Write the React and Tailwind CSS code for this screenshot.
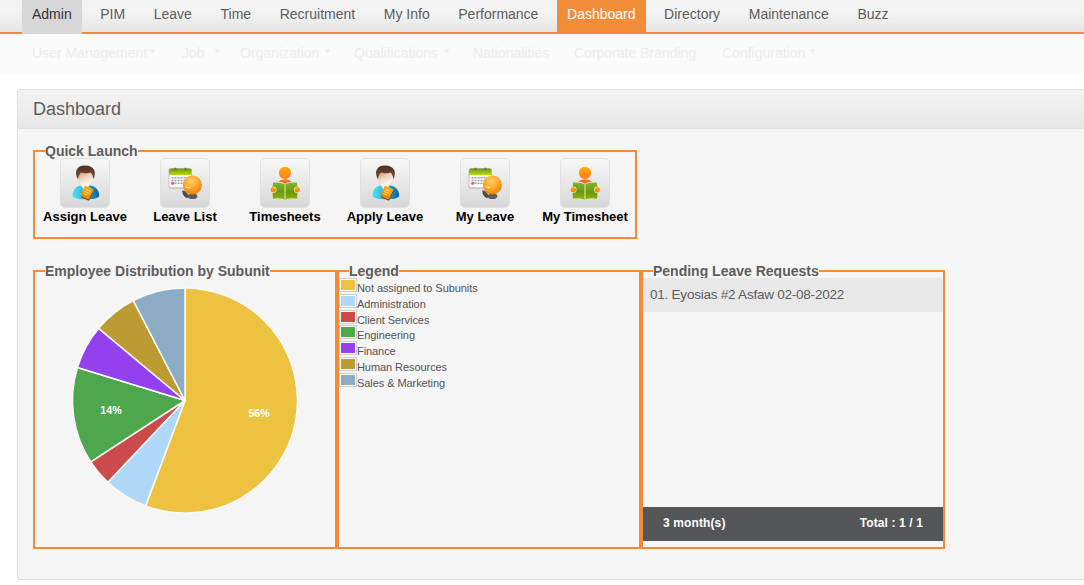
import React from "react";

const mainTabs = ["Admin", "PIM", "Leave", "Time", "Recruitment", "My Info", "Performance", "Dashboard", "Directory", "Maintenance", "Buzz"];

const subTabs = [
  { label: "User Management", arrow: true, width: "w-[150px]", gap: "ml-[2px]" },
  { label: "Job", arrow: true, width: "w-[58px]", gap: "ml-[9px]" },
  { label: "Organization", arrow: true, width: "w-[114px]", gap: "ml-[5px]" },
  { label: "Qualifications", arrow: true, width: "w-[119px]", gap: "ml-[5px]" },
  { label: "Nationalities", arrow: false, width: "w-[101px]", gap: "" },
  { label: "Corporate Branding", arrow: false, width: "w-[148px]", gap: "" },
  { label: "Configuration", arrow: true, width: "w-[110px]", gap: "ml-[4px]" },
];

const units = [
  { name: "Not assigned to Subunits", count: 44, color: "#edc240", label: "56%" },
  { name: "Administration", count: 5, color: "#afd8f8" },
  { name: "Client Services", count: 3, color: "#cb4b4b" },
  { name: "Engineering", count: 11, color: "#4da74d", label: "14%" },
  { name: "Finance", count: 5, color: "#9440ed" },
  { name: "Human Resources", count: 5, color: "#bd9b33" },
  { name: "Sales & Marketing", count: 6, color: "#8cacc6" },
];

function PersonIcon() {
  return (
    <svg viewBox="0 0 50 50" className="-m-px size-[50px]">
      <defs>
        <linearGradient id="body" x1="0" x2="1">
          <stop offset="0" stopColor="#52e0f0" />
          <stop offset=".45" stopColor="#27b8dc" />
          <stop offset="1" stopColor="#0a63a0" />
        </linearGradient>
        <linearGradient id="face" x1="0" x2=".4" y1="0" y2="1">
          <stop offset="0" stopColor="#b98058" />
          <stop offset=".55" stopColor="#ecd0ba" />
          <stop offset="1" stopColor="#fff5ec" />
        </linearGradient>
        <linearGradient id="hair" y1="0" y2="1" x2="0">
          <stop offset="0" stopColor="#4e2f20" />
          <stop offset="1" stopColor="#7c5037" />
        </linearGradient>
        <linearGradient id="card" x1="0" y1="0" x2="0" y2="1">
          <stop offset="0" stopColor="#ffae13" />
          <stop offset="1" stopColor="#f38200" />
        </linearGradient>
      </defs>
      <path d="M12.500 38.500c0-7.500 4-10.500 9-11.200h8c5 .7 10 4 9.700 11-3 3-8 3-13.500 3s-10-.3-13.200-2.800z" fill="url(#body)" />
      <path d="M20.500 26.500l4.500 8 5-8z" fill="#f4f7f8" />
      <ellipse cx="25.200" cy="19.500" rx="7.400" ry="8.300" fill="url(#face)" />
      <path d="M18 21.500C13.800 14 16.500 7.600 25 7.600c9.200 0 12.200 6.500 8.200 13.900-.2-3-.8-5.300-2.700-6.900-3 1.300-7.500.4-9.700-.2-1.600 2-2.500 4-2.800 7.100z" fill="url(#hair)" />
      <g transform="rotate(25 27 35)">
        <rect x="22.800" y="30.400" width="9.300" height="11" rx="1.400" fill="#76401a" />
        <rect x="22" y="29" width="9.500" height="11.300" rx="1.200" fill="url(#card)" />
        <path d="M24 32.200h5.500M24 34.500h5.500M24 36.800h4" stroke="#ffdc6c" strokeWidth="1" />
      </g>
    </svg>
  );
}

function CalendarIcon() {
  return (
    <svg viewBox="0 0 50 50" className="-m-px size-[50px]">
      <defs>
        <radialGradient id="ball" cx=".45" cy=".3" r=".75">
          <stop offset="0" stopColor="#ffcf63" />
          <stop offset=".5" stopColor="#ffa72b" />
          <stop offset="1" stopColor="#ee7b09" />
        </radialGradient>
        <linearGradient id="calHead" x1="0" y1="0" x2="0" y2="1">
          <stop offset="0" stopColor="#6f9408" />
          <stop offset="1" stopColor="#b4e013" />
        </linearGradient>
      </defs>
      <rect x="8.700" y="10.500" width="23.300" height="20" rx="2" fill="#a9aaa9" />
      <rect x="9.300" y="11" width="22" height="18.500" rx="1.500" fill="#fafafa" />
      <path d="M9 17v-4.500q0-2 2-2h18.500q2 0 2 2V17z" fill="url(#calHead)" />
      <path d="M15.500 9.800v2.500M25.500 9.800v2.500" stroke="#666" strokeWidth="1.600" />
      <path d="M11.500 19.800h18M11.500 22.500h18M11.500 25.200h14" stroke="#9da0a1" strokeWidth="1.500" strokeDasharray="2 1" />
      <rect x="11.500" y="24" width="2.600" height="2.700" fill="#d66552" />
      <path d="M22.300 32.500q3-.5 5 2.700 2 3-.2 5-5-2-4.800-7.700z" fill="#4c4c4c" />
      <ellipse cx="32.500" cy="38.300" rx="4.800" ry="2.800" fill="#5b5b5b" />
      <circle cx="32.400" cy="27" r="9.600" fill="url(#ball)" />
      <path d="M24.600 27.600c1.600 1.800 3.700 1.700 6 .9-.8 2.600-4.800 2.400-6-.9z" fill="#fff2ca" />
    </svg>
  );
}

function ReaderIcon() {
  return (
    <svg viewBox="0 0 50 50" className="-m-px size-[50px]">
      <defs>
        <linearGradient id="skin" x1="0" y1="0" x2="0" y2="1">
          <stop offset="0" stopColor="#ffae08" />
          <stop offset="1" stopColor="#ff7c12" />
        </linearGradient>
        <linearGradient id="book" x1="0" y1="0" x2="0" y2="1">
          <stop offset="0" stopColor="#79ba29" />
          <stop offset=".55" stopColor="#6e9610" />
          <stop offset="1" stopColor="#87b607" />
        </linearGradient>
      </defs>
      <circle cx="25" cy="14.900" r="6.100" fill="url(#skin)" />
      <path d="M18 24q2.500-2.700 7-2.700t7 2.700l-4 .2-3 1.500-3-1.500z" fill="#f26b29" />
      <path d="M13 24.600q6-.7 12 1.500 6-2.200 12-1.500v3l1 1-1 12.200q-6-1.200-12 .7-6-1.900-12-.7L12 28.600l1-1z" fill="url(#book)" />
      <path d="M25 26v15" stroke="#dff0b5" strokeWidth="1" />
      <circle cx="13.300" cy="31.700" r="3.200" fill="#edf4e1" />
      <circle cx="37.300" cy="31.700" r="3.200" fill="#edf4e1" />
      <circle cx="13.300" cy="31.700" r="2.700" fill="url(#skin)" />
      <circle cx="37.300" cy="31.700" r="2.700" fill="url(#skin)" />
    </svg>
  );
}

const shortcuts = [
  { label: "Assign Leave", Icon: PersonIcon },
  { label: "Leave List", Icon: CalendarIcon },
  { label: "Timesheets", Icon: ReaderIcon },
  { label: "Apply Leave", Icon: PersonIcon },
  { label: "My Leave", Icon: CalendarIcon },
  { label: "My Timesheet", Icon: ReaderIcon },
];

function Group({ title, className, children }) {
  return (
    <fieldset className={`border-2 border-[#f28c38] ${className}`}>
      <legend className="ml-[10px] h-[14px] whitespace-nowrap text-[14px] font-bold leading-[14px] text-[#5d5d5d]">{title}</legend>
      {children}
    </fieldset>
  );
}

function Pie() {
  const total = units.reduce((sum, u) => sum + u.count, 0);
  const point = (turn, r) => [
    150 + r * Math.sin(turn * 2 * Math.PI),
    122.500 - r * Math.cos(turn * 2 * Math.PI),
  ];
  let start = 0;
  const slices = units.map((u) => {
    const end = start + u.count / total;
    const [x1, y1] = point(start, 112.5);
    const [x2, y2] = point(end, 112.5);
    const [lx, ly] = point((start + end) / 2, 75);
    const d = `M150 122.500L${x1} ${y1}A112.500 112.500 0 ${end - start > 0.5 ? 1 : 0} 1 ${x2} ${y2}Z`;
    start = end;
    return { ...u, d, lx, ly };
  });
  return (
    <svg width="300" height="260" viewBox="0 0 300 260" className="block">
      {slices.map((s) => (
        <path key={s.name} d={s.d} fill={s.color} stroke="#fafafa" strokeWidth="1.500" strokeLinejoin="round" />
      ))}
      {slices.filter((s) => s.label).map((s) => (
        <text key={s.name} x={s.lx + 0.3} y={s.ly + 3.2} textAnchor="middle" className="fill-white text-[10.7px] font-bold">{s.label}</text>
      ))}
    </svg>
  );
}

export default function App() {
  return (
    <div className="h-[585px] w-full overflow-hidden bg-white font-['Liberation_Sans',Arial,sans-serif] text-[#5d5d5d]">
      <nav className="flex h-[34px] gap-[8.6px] border-b-2 border-[#f28c38] bg-linear-to-b from-[#f3f3f3] from-40% to-[#e5e5e5] pl-[22px] text-[14px] leading-[28px]">
        {mainTabs.map((tab) => (
          <a
            key={tab}
            className={
              "h-[34px] shrink-0 whitespace-nowrap px-[10px] " +
              (tab === "Admin" ? "bg-[#d7d7d7] text-[#333]" : tab === "Dashboard" ? "bg-[#f28c38] text-white" : "")
            }
          >
            {tab}
          </a>
        ))}
      </nav>
      <nav className="flex h-[40px] bg-[#fbfbfb] pl-[32px] text-[14px] leading-[38px] text-[#ededed]">
        {subTabs.map((tab) => (
          <a key={tab.label} className={`flex shrink-0 whitespace-nowrap ${tab.width}`}>
            {tab.label}
            {tab.arrow && (
              <svg viewBox="0 0 7 6" className={`mt-[15px] h-[6px] w-[7px] ${tab.gap}`}>
                <path d="M.5 0h6L3.500 5.500z" fill="#f0f0f0" />
              </svg>
            )}
          </a>
        ))}
      </nav>
      <main className="ml-[17px] mt-[15px] h-[491px] rounded-l-[3px] border border-r-0 border-[#dedede] bg-[#f5f5f5]">
        <h1 className="h-[39px] rounded-tl-[2px] border-b border-[#dedede] bg-linear-to-b from-[#f3f3f3] to-[#e8e8e8] pl-[15px] text-[18px] leading-[38px]">Dashboard</h1>
        <div className="pl-[15px] pt-[15px]">
          <Group title="Quick Launch" className="h-[95px] w-[604px]">
            <div className="flex">
              {shortcuts.map(({ label, Icon }) => (
                <a key={label} className="flex w-[100px] flex-col items-center">
                  <span className="size-[50px] rounded-[5px] border border-[#e0e1dc] bg-linear-to-b from-[#f7f7f7] to-[#d8d8d8]">
                    <Icon />
                  </span>
                  <span className="whitespace-nowrap text-[13px] font-bold leading-[17px] text-black">{label}</span>
                </a>
              ))}
            </div>
          </Group>
          <div className="mt-[25px] flex">
            <Group title="Employee Distribution by Subunit" className="h-[285px] w-[304px]">
              <Pie />
            </Group>
            <Group title="Legend" className="h-[285px] w-[304px]">
              <ul className="text-[11px] tracking-[-0.07px]">
                {units.map((u) => (
                  <li key={u.name} className="flex h-[15.830px]">
                    <span className="h-[14px] w-[18px] border border-[#ccc] bg-white p-px">
                      <span className="block h-full" style={{ background: u.color }} />
                    </span>
                    <span className="leading-[20px] text-[#545454]">{u.name}</span>
                  </li>
                ))}
              </ul>
            </Group>
            <Group title="Pending Leave Requests" className="h-[285px] w-[304px]">
              <div className="flex h-[263px] flex-col justify-between">
                <p className="h-[34px] whitespace-nowrap bg-[#e8e8e8] pl-[7px] text-[13.500px] leading-[33px] tracking-[-0.230px]">01. Eyosias #2 Asfaw 02-08-2022</p>
                <div className="flex h-[34px] justify-between bg-[#555658] px-5 text-[12px] font-bold leading-[33px] tracking-[0.12px] text-white">
                  <span>3 month(s)</span>
                  <span>Total : 1 / 1</span>
                </div>
              </div>
            </Group>
          </div>
        </div>
      </main>
    </div>
  );
}
